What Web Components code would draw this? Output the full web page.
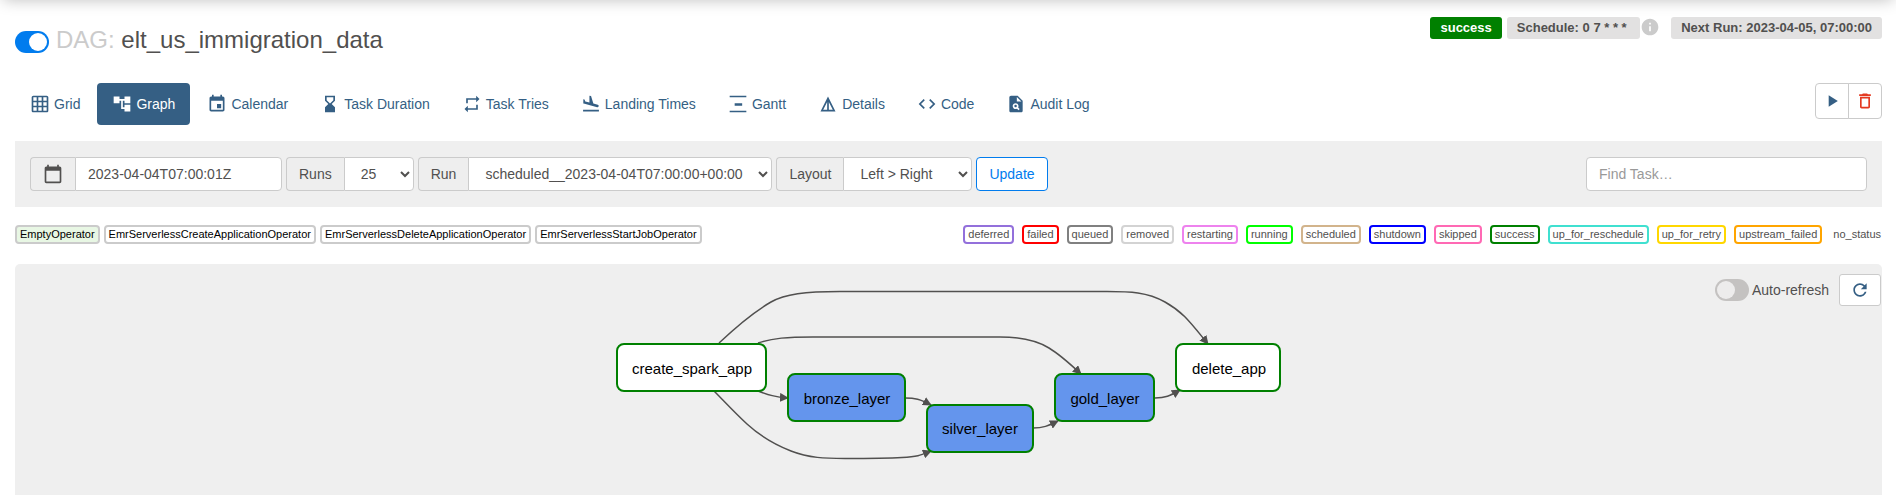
<!DOCTYPE html>
<html lang="en">
<head>
<meta charset="utf-8">
<title>elt_us_immigration_data - Graph</title>
<style>
  body { margin: 0; background: #fff; color: #51504f; font: 14px/20px "Liberation Sans", Arial, sans-serif; }
</style>
</head>
<body>
<dag-page></dag-page>
<script>
const define = (name, html, setup) => {
  const template = document.createElement('template');
  template.innerHTML = '<style>*{box-sizing:border-box}</style>' + html;
  customElements.define(name, class extends HTMLElement {
    constructor() {
      super();
      this.attachShadow({ mode: 'open' }).append(template.content.cloneNode(true));
    }
    connectedCallback() { if (setup) setup(this, this.shadowRoot); }
  });
};

const ICONS = {
  grid: 'M20 2H4c-1.1 0-2 .9-2 2v16c0 1.1.9 2 2 2h16c1.1 0 2-.9 2-2V4c0-1.1-.9-2-2-2zM8 20H4v-4h4v4zm0-6H4v-4h4v4zm0-6H4V4h4v4zm6 12h-4v-4h4v4zm0-6h-4v-4h4v4zm0-6h-4V4h4v4zm6 12h-4v-4h4v4zm0-6h-4v-4h4v4zm0-6h-4V4h4v4z',
  graph: 'M22 11V3h-7v3H9V3H2v8h7V8h2v10h4v3h7v-8h-7v3h-2V8h2v3z',
  calendar: 'M17 12h-5v5h5v-5zM16 1v2H8V1H6v2H5c-1.11 0-1.99.9-1.99 2L3 19c0 1.1.89 2 2 2h14c1.1 0 2-.9 2-2V5c0-1.1-.9-2-2-2h-1V1h-2zm3 18H5V8h14v11z',
  hourglass: 'M18 22l-.01-6L14 12l3.99-4.01L18 2H6v6l4 4-4 3.99V22h12zM8 7.5V4h8v3.5l-4 4-4-4z',
  repeat: 'M7 7h10v3l4-4-4-4v3H5v6h2V7zm10 10H7v-3l-4 4 4 4v-3h12v-6h-2v4z',
  landing: 'M2.5 19h19v2h-19zm7.18-5.73l4.35 1.16 5.31 1.42c.8.21 1.62-.26 1.84-1.06.21-.8-.26-1.62-1.06-1.84l-5.31-1.42-2.76-9.02L10.12 2v8.28L5.15 8.95l-.93-2.32-1.45-.39v5.17l1.6.43 5.31 1.43z',
  gantt: 'M2 2h20v2H2zM8 11h9v3H8zM2 20h20v2H2z',
  details: 'M3 21h18L12 3 3 21zm8-2H6.24L11 9.48V19zm2 0V9.48L17.76 19H13z',
  code: 'M9.4 16.6L4.8 12l4.6-4.6L8 6l-6 6 6 6 1.4-1.4zm5.2 0l4.6-4.6-4.6-4.6L16 6l6 6-6 6-1.4-1.4z',
  audit: 'M14 2H6c-1.1 0-2 .9-2 2v16c0 1.1.9 2 2 2h12c1.1 0 2-.9 2-2V8l-6-6zm1.04 17.45l-1.88-1.88c-1.33.71-3.01.53-4.13-.59-1.37-1.37-1.37-3.58 0-4.95 1.37-1.37 3.58-1.37 4.95 0 1.12 1.12 1.31 2.8.59 4.13l1.88 1.88-1.41 1.41zM13 9V3.5L18.5 9H13zM11.5 13a1.5 1.5 0 1 0 0 3a1.5 1.5 0 1 0 0-3z',
  play: 'M8 5v14l11-7z',
  trash: 'M6 19c0 1.1.9 2 2 2h8c1.1 0 2-.9 2-2V7H6v12zM8 9h8v10H8V9zm7.5-5l-1-1h-5l-1 1H5v2h14V4z',
  date: 'M20 3h-1V1h-2v2H7V1H5v2H4c-1.1 0-2 .9-2 2v16c0 1.1.9 2 2 2h16c1.1 0 2-.9 2-2V5c0-1.1-.9-2-2-2zm0 18H4V8h16v13z',
  refresh: 'M17.65 6.35C16.2 4.9 14.21 4 12 4c-4.42 0-7.99 3.58-7.99 8s3.57 8 7.99 8c3.73 0 6.84-2.55 7.73-6h-2.08c-.82 2.33-3.04 4-5.65 4-3.31 0-6-2.69-6-6s2.69-6 6-6c1.66 0 3.14.69 4.22 1.78L13 11h7V4l-2.35 2.35z',
  info: 'M12 2C6.48 2 2 6.48 2 12s4.48 10 10 10 10-4.48 10-10S17.52 2 12 2zm1 15h-2v-6h2v6zm0-8h-2V7h2v2z'
};

define('md-icon', `
  <style>
    :host { display: block; width: 20px; height: 20px; flex: none; }
    svg { display: block; width: 100%; height: 100%; fill: currentColor; fill-rule: evenodd; }
  </style>
  <svg viewBox="0 0 24 24" aria-hidden="true"><path/></svg>`,
  (el, root) => root.querySelector('path').setAttribute('d', ICONS[el.getAttribute('name')] || ''));

define('toggle-switch', `
  <style>
    :host { display: block; }
    label { display: flex; align-items: center; gap: 3px; }
    input { appearance: none; margin: 0; width: 34px; height: 22px; border-radius: 11px; background: #c4c2c1; padding: 2px; }
    input::before { content: ""; display: block; width: 18px; height: 18px; border-radius: 50%; background: #edecec; }
    input:checked { background: #017cee; }
    input:checked::before { margin-left: 12px; background: #fff; }
  </style>
  <label><input type="checkbox"><slot></slot></label>`,
  (el, root) => {
    const input = root.querySelector('input');
    input.checked = el.hasAttribute('checked');
    if (el.hasAttribute('label')) input.setAttribute('aria-label', el.getAttribute('label'));
  });

define('status-label', `
  <style>
    :host { display: block; padding: 0 10px; border-radius: 3px; background: #e2e1e1; color: #51504f; font: bold 13px/22px "Liberation Sans", Arial, sans-serif; white-space: nowrap; }
    :host([success]) { background: green; color: #fff; }
  </style><slot></slot>`);

define('dag-header', `
  <style>
    :host { display: flex; justify-content: space-between; align-items: flex-start; padding-top: 17px; }
    .title { display: flex; align-items: center; gap: 7px; padding-top: 10px; }
    toggle-switch { padding-top: 4px; }
    h3 { margin: 0; font-size: 24px; line-height: 26px; font-weight: 400; color: #51504f; }
    h3 span { color: #cbcbcb; }
    .labels { display: flex; gap: 5px; }
    .schedule { display: flex; color: #cbcbcb; margin-right: 6px; }
  </style>
  <div class="title">
    <toggle-switch checked label="Pause or unpause DAG"></toggle-switch>
    <h3><span>DAG:</span> elt_us_immigration_data</h3>
  </div>
  <div class="labels">
    <status-label success>success</status-label>
    <div class="schedule"><status-label>Schedule: 0 7 * * *&nbsp;</status-label><md-icon name="info"></md-icon></div>
    <status-label>Next Run: 2023-04-05, 07:00:00</status-label>
  </div>`);

define('nav-tab', `
  <style>
    :host { display: block; }
    a { display: flex; align-items: center; gap: 4px; height: 42px; padding: 0 15px; border-radius: 4px; color: #355f84; text-decoration: none; white-space: nowrap; }
    :host([active]) a { background: #355f84; color: #fff; }
  </style>
  <a href="#"><slot></slot></a>`,
  (el, root) => {
    const icon = document.createElement('md-icon');
    icon.setAttribute('name', el.getAttribute('icon'));
    root.querySelector('a').prepend(icon);
  });

define('dag-nav', `
  <style>
    :host { display: flex; justify-content: space-between; align-items: flex-start; }
    nav { display: flex; gap: 2px; }
    .actions { display: flex; }
    button { display: grid; place-items: center; width: 34px; height: 36px; padding: 0; border: 1px solid #cbcbcb; border-radius: 4px 0 0 4px; background: #fff; color: #355f84; }
    button + button { margin-left: -1px; border-radius: 0 4px 4px 0; color: #e43921; }
  </style>
  <nav>
    <nav-tab icon="grid">Grid</nav-tab>
    <nav-tab icon="graph" active>Graph</nav-tab>
    <nav-tab icon="calendar">Calendar</nav-tab>
    <nav-tab icon="hourglass">Task Duration</nav-tab>
    <nav-tab icon="repeat">Task Tries</nav-tab>
    <nav-tab icon="landing">Landing Times</nav-tab>
    <nav-tab icon="gantt">Gantt</nav-tab>
    <nav-tab icon="details">Details</nav-tab>
    <nav-tab icon="code">Code</nav-tab>
    <nav-tab icon="audit">Audit Log</nav-tab>
  </nav>
  <div class="actions">
    <button aria-label="Trigger DAG"><md-icon name="play"></md-icon></button>
    <button aria-label="Delete DAG"><md-icon name="trash"></md-icon></button>
  </div>`);

define('filter-bar', `
  <style>
    :host { display: flex; justify-content: space-between; background: #efefef; padding: 16px 15px; }
    form { display: flex; gap: 4px; }
    .group { display: flex; height: 34px; }
    label { display: flex; align-items: center; padding: 0 12px; border: 1px solid #cbcbcb; border-right: 0; border-radius: 4px 0 0 4px; background: #eee; }
    input, select { height: 34px; padding: 6px 12px; border: 1px solid #cbcbcb; border-radius: 4px; background: #fff; color: #51504f; font: inherit; }
    select { padding: 6px 0 6px 12px; }
    .group input, .group select { border-radius: 0 4px 4px 0; }
    input::placeholder { color: #999; }
    button { height: 34px; padding: 0 12px; border: 1px solid #017cee; border-radius: 4px; background: #fff; color: #017cee; font: inherit; }
    #date { width: 207px; } #runs { width: 70px; } #run { width: 304px; } #layout { width: 129px; }
    #find { width: 281px; }
  </style>
  <form>
    <div class="group"><label for="date" aria-label="Base date"><md-icon name="date"></md-icon></label><input id="date" value="2023-04-04T07:00:01Z"></div>
    <div class="group"><label for="runs">Runs</label><select id="runs"><option>25</option></select></div>
    <div class="group"><label for="run">Run</label><select id="run"><option>scheduled__2023-04-04T07:00:00+00:00</option></select></div>
    <div class="group"><label for="layout">Layout</label><select id="layout"><option>Left &gt; Right</option></select></div>
    <button type="button">Update</button>
  </form>
  <input id="find" type="text" placeholder="Find Task…" aria-label="Find Task">`);

define('legend-tag', `
  <style>
    :host { display: block; padding: 0 3px; border: 2px solid var(--tag, #cbcbcb); border-radius: 4px; font-size: 11px; line-height: 15px; white-space: nowrap; }
    :host([plain]) { border: 0; padding: 2px 1px 2px 3px; }
  </style><slot></slot>`);

define('dag-legend', `
  <style>
    :host { display: flex; justify-content: space-between; padding: 18px 0 20px; }
    .operators { display: flex; gap: 4px; color: #000; }
    .states { display: flex; gap: 8px; }
    .empty { background: #e8f7e4; }
  </style>
  <div class="operators">
    <legend-tag class="empty">EmptyOperator</legend-tag>
    <legend-tag>EmrServerlessCreateApplicationOperator</legend-tag>
    <legend-tag>EmrServerlessDeleteApplicationOperator</legend-tag>
    <legend-tag>EmrServerlessStartJobOperator</legend-tag>
  </div>
  <div class="states">
    <legend-tag style="--tag:mediumpurple">deferred</legend-tag>
    <legend-tag style="--tag:red">failed</legend-tag>
    <legend-tag style="--tag:gray">queued</legend-tag>
    <legend-tag style="--tag:lightgrey">removed</legend-tag>
    <legend-tag style="--tag:violet">restarting</legend-tag>
    <legend-tag style="--tag:lime">running</legend-tag>
    <legend-tag style="--tag:tan">scheduled</legend-tag>
    <legend-tag style="--tag:blue">shutdown</legend-tag>
    <legend-tag style="--tag:hotpink">skipped</legend-tag>
    <legend-tag style="--tag:green">success</legend-tag>
    <legend-tag style="--tag:turquoise">up_for_reschedule</legend-tag>
    <legend-tag style="--tag:gold">up_for_retry</legend-tag>
    <legend-tag style="--tag:orange">upstream_failed</legend-tag>
    <legend-tag plain>no_status</legend-tag>
  </div>`);

define('task-graph', `
  <style>
    :host { display: block; }
    svg { display: block; margin: 0 auto; }
    path.edge { fill: none; stroke: #51504f; stroke-width: 1.5; marker-end: url(#arrow); }
    rect { fill: #fff; stroke: green; stroke-width: 2; }
    .group rect { fill: cornflowerblue; }
    text { font-size: 15px; text-anchor: middle; fill: #000; }
  </style>
  <svg width="667" height="220" viewBox="0 0 667 220" role="img" aria-label="Task graph">
    <defs><marker id="arrow" viewBox="0 0 10 10" refX="9" refY="5" markerUnits="userSpaceOnUse" markerWidth="9" markerHeight="9" orient="auto"><path d="M0 0L10 5L0 10z" fill="#51504f"/></marker></defs>
    <path class="edge" d="M104 79C122 62 142 46 156 38S190 27.5 225 27.5H492C515 27.5 532 28 550 38S575 58 593 80"/>
    <path class="edge" d="M143 79C158 74 172 73 198 73H385C410 73 424 78 434 84S452 97 466 110"/>
    <path class="edge" d="M143 127C154 131 160 133 173 134"/>
    <path class="edge" d="M99 127C110 138 120 149 132 160S158 180 176 187S210 194.500 230 194.500S270 194.500 287 193.500S306 191 316 187"/>
    <path class="edge" d="M290 134C300 134 305 135 316 141"/>
    <path class="edge" d="M418 164C428 164 433 162 443 157"/>
    <path class="edge" d="M540 134C550 134 555 132 565 126"/>
    <g><rect x="2" y="80" width="149" height="47" rx="7"/><text x="77" y="110">create_spark_app</text></g>
    <g class="group"><rect x="173" y="110" width="117" height="47" rx="7"/><text x="232" y="140">bronze_layer</text></g>
    <g class="group"><rect x="312" y="141" width="106" height="47" rx="7"/><text x="365" y="170">silver_layer</text></g>
    <g class="group"><rect x="440" y="110" width="99" height="47" rx="7"/><text x="490" y="140">gold_layer</text></g>
    <g><rect x="561" y="80" width="104" height="47" rx="7"/><text x="614" y="110">delete_app</text></g>
  </svg>`);

define('graph-panel', `
  <style>
    :host { display: block; position: relative; background: #efefef; border-radius: 5px 5px 0 0; }
    .tools { position: absolute; top: 10px; right: 1px; display: flex; align-items: center; gap: 10px; }
    button { display: grid; place-items: center; width: 42px; height: 32px; padding: 0; border: 1px solid #cbcbcb; border-radius: 3px; background: #fff; color: #355f84; }
  </style>
  <task-graph></task-graph>
  <div class="tools">
    <toggle-switch>Auto-refresh</toggle-switch>
    <button aria-label="Refresh"><md-icon name="refresh"></md-icon></button>
  </div>`);

define('dag-page', `
  <style>
    :host { display: flex; flex-direction: column; min-height: 100vh; padding: 0 14px 0 15px; position: relative; overflow: hidden; }
    .shade { position: absolute; left: 0; right: 0; bottom: 100%; height: 50px; box-shadow: 0 3px 15px -3px rgba(0,0,0,.25); }
    dag-nav { margin: 30px 0 16px; }
    graph-panel { flex: 1; }
  </style>
  <div class="shade"></div>
  <dag-header></dag-header>
  <dag-nav></dag-nav>
  <filter-bar></filter-bar>
  <dag-legend></dag-legend>
  <graph-panel></graph-panel>`);
</script>
</body>
</html>
